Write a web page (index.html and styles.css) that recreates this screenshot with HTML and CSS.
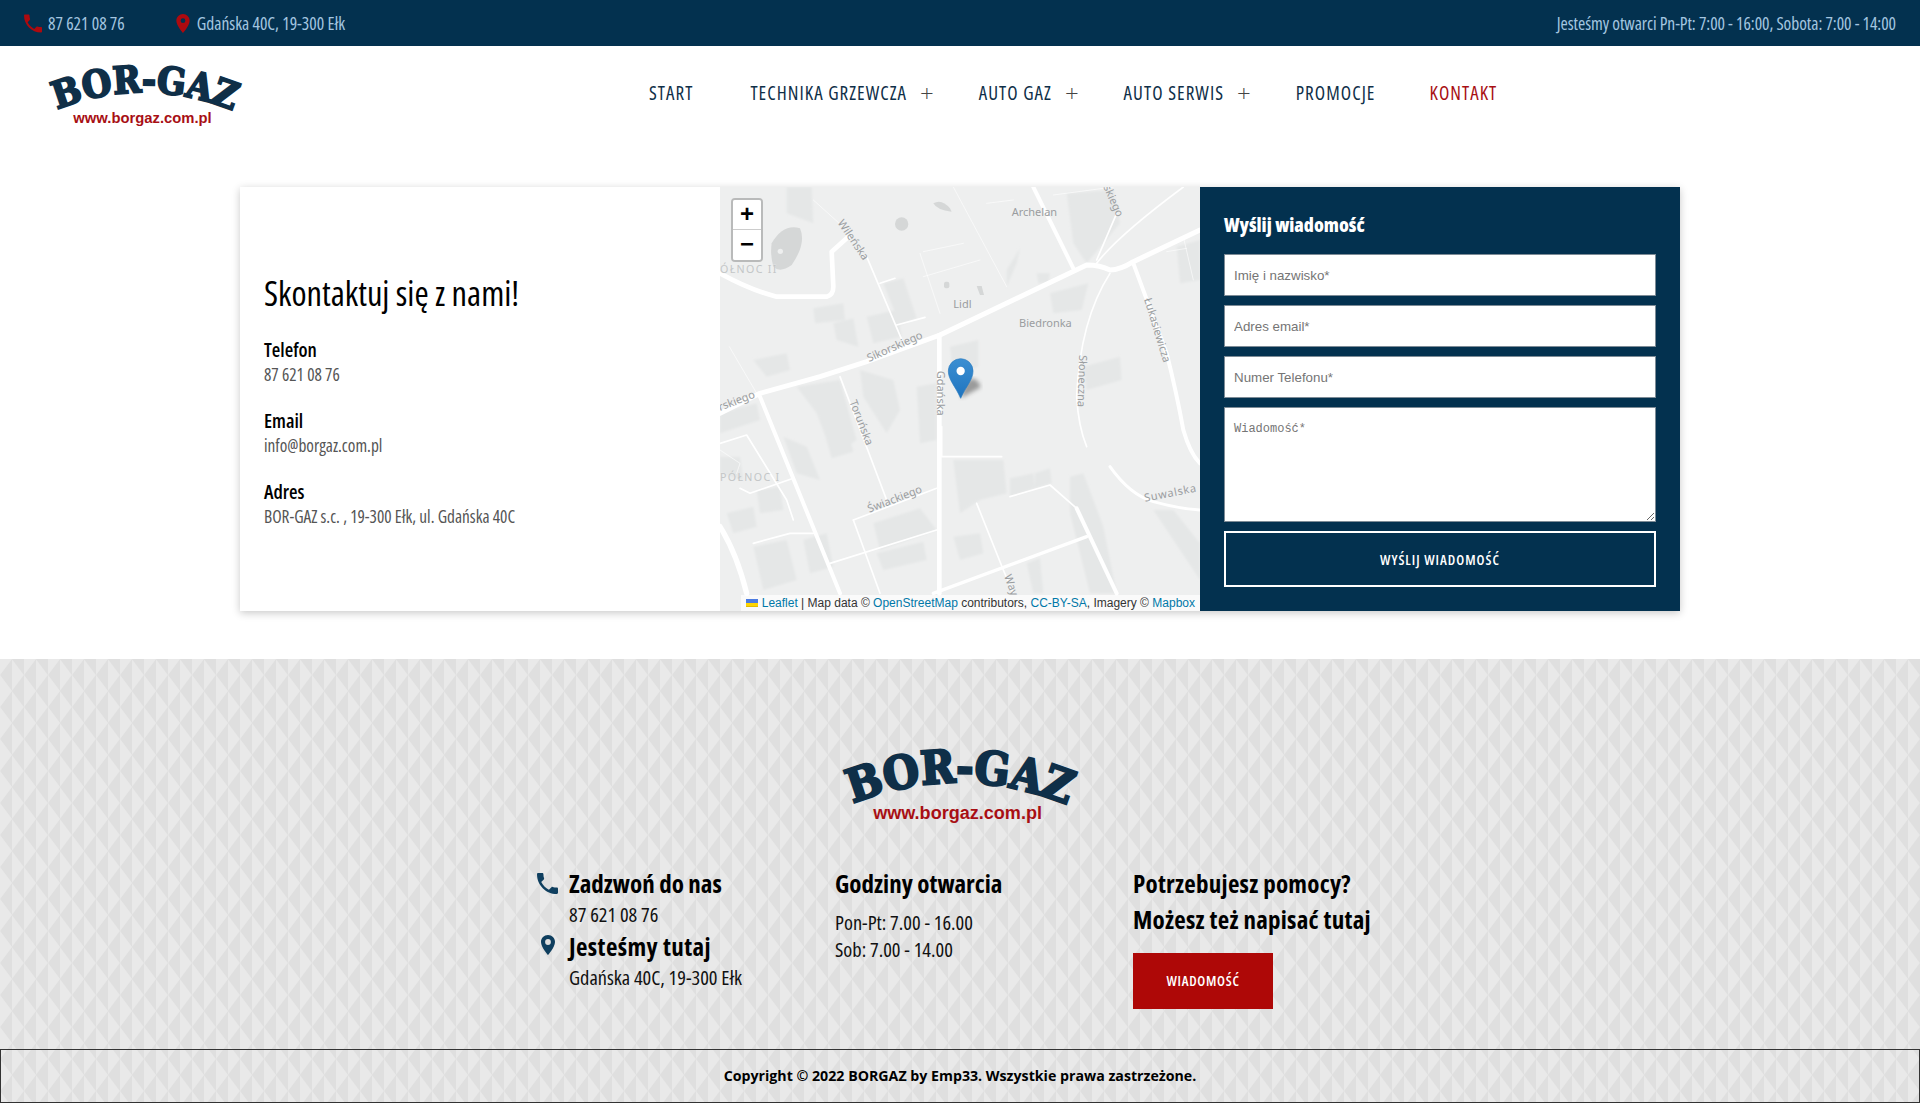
FILE: index.html
```html
<!DOCTYPE html>
<html lang="pl">
<head>
<meta charset="utf-8">
<title>BOR-GAZ Kontakt</title>
<link rel="stylesheet" href="styles.css">
</head>
<body>
<div class="topbar">
  <div class="top-left">
    <span class="top-item"><svg class="top-ico phone" viewBox="3 3 18 18"><path d="M6.62 10.79c1.44 2.83 3.76 5.14 6.59 6.59l2.2-2.2c.27-.27.67-.36 1.02-.24 1.12.37 2.33.57 3.57.57.55 0 1 .45 1 1V20c0 .55-.45 1-1 1-9.39 0-17-7.61-17-17 0-.55.45-1 1-1h3.5c.55 0 1 .45 1 1 0 1.25.2 2.45.57 3.57.11.35.03.74-.25 1.02l-2.2 2.2z"/></svg>87 621 08 76</span>
    <span class="top-item"><svg class="top-ico pin" viewBox="5 2 14 20"><path fill-rule="evenodd" d="M12 2C8.13 2 5 5.13 5 9c0 5.25 7 13 7 13s7-7.75 7-13c0-3.87-3.13-7-7-7zm0 9.5a2.5 2.5 0 1 1 0-5 2.5 2.5 0 0 1 0 5z"/></svg>Gdańska 40C, 19-300 Ełk</span>
  </div>
  <div class="top-right">Jesteśmy otwarci Pn-Pt: 7:00 - 16:00, Sobota: 7:00 - 14:00</div>
</div>

<header class="header">
  <svg class="logo" viewBox="0 0 196 68">
    <defs><path id="arc1" d="M2 53 Q 98 11 196 55"/></defs>
    <text class="logo-main"><textPath href="#arc1" startOffset="49.5%" text-anchor="middle">BOR-GAZ</textPath></text>
    <text class="logo-url" x="95.5" y="63" text-anchor="middle">www.borgaz.com.pl</text>
  </svg>
  <nav class="nav">
    <a class="nav-link nav-start">START</a>
    <a class="nav-link nav-tech">TECHNIKA GRZEWCZA<span class="plus">+</span></a>
    <a class="nav-link nav-gaz">AUTO GAZ<span class="plus">+</span></a>
    <a class="nav-link nav-ser">AUTO SERWIS<span class="plus">+</span></a>
    <a class="nav-link nav-pro">PROMOCJE</a>
    <a class="nav-link active">KONTAKT</a>
  </nav>
</header>

<main class="card">
  <section class="info">
    <h1 class="info-title">Skontaktuj się z nami!</h1>
    <div class="info-block"><h3>Telefon</h3><p>87 621 08 76</p></div>
    <div class="info-block"><h3>Email</h3><p>info@borgaz.com.pl</p></div>
    <div class="info-block"><h3>Adres</h3><p>BOR-GAZ s.c. , 19-300 Ełk, ul. Gdańska 40C</p></div>
  </section>

  <section class="map">
    <svg class="map-svg" viewBox="0 21 1440 1272" preserveAspectRatio="none">
      <defs>
        <linearGradient id="pinfill" x1="0" y1="0" x2="0" y2="1"><stop offset="0" stop-color="#3b8fd2"/><stop offset="1" stop-color="#1f74bf"/></linearGradient>
        <filter id="blur"><feGaussianBlur stdDeviation="6"/></filter>
        <filter id="soft"><feGaussianBlur stdDeviation="2.5"/></filter>
      </defs>
      <rect x="0" y="21" width="1440" height="1272" fill="#eeefef"/>
      <g fill="#e5e7e7" filter="url(#soft)">
        <polygon points="200,21 275,21 280,130 200,100"/>
        <polygon points="490,310 550,295 590,415 540,435"/>
        <polygon points="280,385 370,370 375,420 285,430"/>
        <polygon points="340,430 400,415 415,500 350,480"/>
        <polygon points="440,410 530,390 545,470 460,490"/>
        <polygon points="100,540 200,520 210,570 140,590"/>
        <polygon points="990,340 1105,310 1085,390 1000,400"/>
        <polygon points="1090,560 1200,530 1205,600 1100,630"/>
        <polygon points="690,500 775,480 775,560 700,590"/>
        <polygon points="420,570 520,600 540,690 500,760 430,650"/>
        <polygon points="590,620 650,610 650,780 600,790"/>
        <polygon points="230,620 360,600 410,780 340,830 290,700"/>
        <polygon points="305,730 375,715 400,815 335,835"/>
        <polygon points="190,770 260,800 300,900 230,880"/>
        <polygon points="0,700 110,670 120,720 0,760"/>
        <polygon points="0,830 60,830 70,900 0,880"/>
        <polygon points="700,840 850,840 860,940 780,960 720,1000"/>
        <polygon points="870,895 940,880 945,925 870,950"/>
        <polygon points="945,880 990,865 995,910 945,925"/>
        <polygon points="110,930 180,920 190,990 120,1000"/>
        <polygon points="20,1000 100,980 110,1040 40,1060"/>
        <polygon points="460,1030 600,985 650,1050 480,1110"/>
        <polygon points="470,1120 610,1085 620,1140 490,1170"/>
        <polygon points="250,1080 320,1060 340,1160 270,1180"/>
        <polygon points="100,1100 200,1080 230,1200 130,1230"/>
        <polygon points="700,1070 780,1060 790,1120 720,1140"/>
        <polygon points="1040,40 1180,30 1200,130 1100,250 1060,190"/>
        <polygon points="1370,200 1440,180 1440,300 1380,310"/>
        <polygon points="1050,890 1090,880 1150,1040 1190,1240 1110,1240 1050,1000"/>
        <polygon points="1300,990 1360,990 1440,1090 1440,1200"/>
        <polygon points="860,270 900,205 890,250 860,320"/>
        <polygon points="950,280 990,280 985,310 955,310"/>
        <polygon points="920,1150 960,1135 970,1240 940,1240"/>
        <polygon points="1090,1090 1130,1080 1190,1240 1140,1240"/>
      </g>
      <g fill="#d5d7d7">
        <path d="M155 190 Q190 130 240 145 Q260 190 215 255 Q180 280 160 260 Q150 225 155 190Z"/>
        <circle cx="545" cy="132" r="20"/>
        <path d="M640 70 Q665 55 690 85 L695 95 Q650 90 640 70Z"/>
        <rect x="672" y="305" width="16" height="20" rx="6"/>
        <path d="M770 318 L785 318 L792 345 L780 345Z"/>
      </g>
      <circle cx="181" cy="214" r="8" fill="#eeefef"/>
      <g fill="none" stroke="#fff" stroke-linecap="round" stroke-linejoin="round">
        <g stroke-width="3" stroke-opacity=".6">
          <path d="M280 60 L380 150"/>
          <path d="M600 220 L660 400"/>
          <path d="M700 21 L860 320"/>
          <path d="M800 70 L880 60"/>
          <path d="M610 215 L730 190"/>
          <path d="M610 290 L780 240"/>
          <path d="M28 500 L110 640"/>
          <path d="M0 810 L60 850 L50 880"/>
          <path d="M1390 170 L1420 300"/>
          <path d="M1340 215 L1400 205"/>
          <path d="M1000 45 L1180 21"/>
        </g>
        <g stroke-width="5">
          <path d="M440 230 L550 490"/>
          <path d="M480 310 L525 295"/>
          <path d="M530 435 L615 412"/>
          <path d="M360 590 L500 960"/>
          <path d="M400 1020 L650 925"/>
          <path d="M400 1020 L480 1240"/>
          <path d="M330 1150 L650 1050"/>
          <path d="M100 1090 L210 1060 L280 1060"/>
          <path d="M60 925 L90 940 L220 895"/>
          <path d="M0 790 L80 765 L200 960 L220 1020"/>
          <path d="M665 740 L665 830 L845 830"/>
          <path d="M770 970 L850 1170 L880 1240"/>
          <path d="M870 950 L990 915 L1070 985"/>
          <path d="M1170 280 Q1080 420 1070 650 Q1075 740 1100 800"/>
          <path d="M1190 100 L1130 240"/>
          <path d="M1130 250 Q1190 170 1390 21"/>
        </g>
        <g stroke-width="12">
          <path d="M940 21 L1060 265"/>
          <path d="M120 650 L360 1240"/>
          <path d="M1240 250 L1340 520 Q1370 640 1390 750 Q1410 820 1440 850"/>
          <path d="M1170 860 Q1230 945 1300 965 Q1370 985 1440 990" stroke-width="9"/>
          <path d="M640 1240 L1100 1070" stroke-width="10"/>
          <path d="M1070 985 L1190 1240"/>
          <path d="M0 1040 Q50 1120 80 1240" stroke-width="16"/>
        </g>
        <path stroke-width="15" d="M0 700 L120 640 L300 590 L440 545 L660 465 L1100 255 Q1140 255 1170 270 Q1200 270 1240 245 L1440 150"/>
        <path stroke-width="14" d="M658 465 L658 1240"/>
        <path stroke-width="14" d="M0 280 Q90 330 170 350 L320 350 Q340 345 340 320 L335 215 L385 170"/>
      </g>
      <g class="map-labels">
        <text x="875" y="107">Archelan</text>
        <text x="700" y="384">Lidl</text>
        <text x="897" y="440">Biedronka</text>
        <text x="0" y="278" class="district">ÓŁNOC II</text>
        <text x="0" y="903" class="district">PÓŁNOC I</text>
        <text transform="translate(447 546) rotate(-24)">Sikorskiego</text>
        <text transform="translate(0 693) rotate(-21)">rskiego</text>
        <text transform="translate(448 998) rotate(-21)">Świackiego</text>
        <text transform="translate(352 128) rotate(56)">Wileńska</text>
        <text transform="translate(1150 21) rotate(66)">skiego</text>
        <text transform="translate(1272 358) rotate(73)">Łukasiewicza</text>
        <text transform="translate(1078 525) rotate(92)">Słoneczna</text>
        <text transform="translate(650 572) rotate(90)">Gdańska</text>
        <text transform="translate(388 665) rotate(69)">Toruńska</text>
        <text class="wide-label" transform="translate(1275 965) rotate(-11)">Suwalska</text>
        <text transform="translate(852 1188) rotate(70)">Way</text>
      </g>
      <path d="M722 655 L782 622 Q776 598 755 595 L735 610Z" fill="#555" opacity=".55" filter="url(#blur)"/>
      <path d="M722 655 C706 618 685 600 685 573 A37 37 0 1 1 759 573 C759 600 738 618 722 655Z" fill="url(#pinfill)" stroke="#2a7cc0" stroke-width="2"/>
      <circle cx="722" cy="573" r="12.5" fill="#fff"/>
    </svg>
    <div class="zoom-ctl"><a class="zoom-btn">+</a><a class="zoom-btn">−</a></div>
    <div class="attrib"><svg class="flag" viewBox="0 0 12 8"><rect width="12" height="4" fill="#4C7BE1"/><rect y="4" width="12" height="3" fill="#FFD500"/><rect y="7" width="12" height="1" fill="#E0BC00"/></svg> <a>Leaflet</a> | Map data © <a>OpenStreetMap</a> contributors, <a>CC-BY-SA</a>, Imagery © <a>Mapbox</a></div>
  </section>

  <section class="form">
    <h2 class="form-title">Wyślij wiadomość</h2>
    <input class="field" type="text" placeholder="Imię i nazwisko*">
    <input class="field" type="text" placeholder="Adres email*">
    <input class="field" type="text" placeholder="Numer Telefonu*">
    <textarea class="field area" placeholder="Wiadomość*"></textarea>
    <button class="send" type="button">WYŚLIJ WIADOMOŚĆ</button>
  </section>
</main>

<footer class="footer">
  <svg class="logo foot-logo" viewBox="0 0 196 68">
    <defs><path id="arc2" d="M2 53 Q 98 11 196 55"/></defs>
    <text class="logo-main"><textPath href="#arc2" startOffset="49.5%" text-anchor="middle">BOR-GAZ</textPath></text>
    <text class="logo-url" x="96" y="62.5" text-anchor="middle">www.borgaz.com.pl</text>
  </svg>
  <div class="foot-cols">
    <div class="foot-col">
      <div class="contact-row">
        <svg class="foot-ico" viewBox="3 3 18 18"><path d="M6.62 10.79c1.44 2.83 3.76 5.14 6.59 6.59l2.2-2.2c.27-.27.67-.36 1.02-.24 1.12.37 2.33.57 3.57.57.55 0 1 .45 1 1V20c0 .55-.45 1-1 1-9.39 0-17-7.61-17-17 0-.55.45-1 1-1h3.5c.55 0 1 .45 1 1 0 1.25.2 2.45.57 3.57.11.35.03.74-.25 1.02l-2.2 2.2z"/></svg>
        <h4 class="foot-h">Zadzwoń do nas</h4>
        <p class="foot-p">87 621 08 76</p>
      </div>
      <div class="contact-row">
        <svg class="foot-ico foot-pin" viewBox="5 2 14 20"><path fill-rule="evenodd" d="M12 2C8.13 2 5 5.13 5 9c0 5.25 7 13 7 13s7-7.75 7-13c0-3.87-3.13-7-7-7zm0 9.9a2.9 2.9 0 1 1 0-5.8 2.9 2.9 0 0 1 0 5.8z"/></svg>
        <h4 class="foot-h foot-wide">Jesteśmy tutaj</h4>
        <p class="foot-p">Gdańska 40C, 19-300 Ełk</p>
      </div>
    </div>
    <div class="foot-col">
      <h4 class="foot-h">Godziny otwarcia</h4>
      <p class="foot-p hours">Pon-Pt: 7.00 - 16.00</p>
      <p class="foot-p hours">Sob: 7.00 - 14.00</p>
    </div>
    <div class="foot-col">
      <h4 class="foot-h help">Potrzebujesz pomocy?</h4>
      <h4 class="foot-h help">Możesz też napisać tutaj</h4>
      <a class="msg-btn">WIADOMOŚĆ</a>
    </div>
  </div>
  <div class="copy">Copyright © 2022 BORGAZ by Emp33. Wszystkie prawa zastrzeżone.</div>
</footer>
</body>
</html>
```
FILE: styles.css
```css
* { box-sizing: border-box; }
html, body { margin: 0; padding: 0; }
body {
  width: 1920px;
  height: 1103px;
  overflow: hidden;
  background: #fff;
  color: #000;
  font-family: "Open Sans", "Noto Sans", sans-serif;
  font-stretch: 75%;
}
h1, h2, h3, h4, p { margin: 0; font-weight: inherit; }

/* top bar */
.topbar {
  height: 46px;
  background: #03314f;
  color: #a4c6e0;
  display: flex;
  justify-content: space-between;
  align-items: center;
  padding: 0 24px;
  font-size: 17.5px;
}
.top-left { display: flex; align-items: center; gap: 51px; }
.top-item { display: flex; align-items: center; }
.top-ico { fill: #ad0a0f; margin-right: 6px; height: 19px; }
.top-ico.phone { width: 18px; }
.top-ico.pin { width: 14px; margin-right: 7px; }
.top-right { letter-spacing: -.05px; }

/* header */
.header {
  height: 141px;
  display: flex;
  align-items: flex-start;
  padding: 14px 0 0 47px;
}
.logo { width: 196px; height: 68px; flex: none; overflow: visible; }
.logo-main {
  font-family: "DejaVu Serif Condensed", "DejaVu Serif", serif;
  font-stretch: normal;
  font-weight: 700;
  font-size: 37.5px;
  fill: #0f2f48;
  stroke: #0f2f48;
  stroke-width: 2px;
}
.logo-url {
  font-family: "Liberation Sans", sans-serif;
  font-stretch: normal;
  font-weight: 700;
  font-size: 14.8px;
  fill: #a80f14;
}
.nav {
  display: flex;
  align-items: center;
  margin-left: 406px;
  height: 33px;
  margin-top: 16px;
  font-size: 19px;
  letter-spacing: 1.05px;
  color: #0f2f48;
}
.nav-link { display: flex; align-items: center; margin-right: 45px; white-space: nowrap; }
.nav-start { margin-right: 57px; }
.nav-pro { margin-right: 54px; }
.nav-link.active { color: #a80f14; margin-right: 0; }
.plus { margin-left: 13px; font-size: 24px; font-stretch: normal; line-height: 20px; font-weight: 300; color: #444; letter-spacing: 0; }

/* contact card */
.card {
  width: 1440px;
  height: 424px;
  margin: 0 auto;
  display: grid;
  grid-template-columns: repeat(3, 480px);
  background: #fff;
  box-shadow: 0 2px 8px rgba(0, 0, 0, .22);
}
.info {
  padding: 0 24px;
  display: flex;
  flex-direction: column;
  justify-content: center;
}
.info-title { font-size: 34.3px; line-height: 46px; margin-bottom: 20px; font-weight: 400; }
.info-block { margin-bottom: 21px; }
.info-block:last-child { margin-bottom: 0; }
.info-block h3 { font-size: 19.5px; font-weight: 600; line-height: 27px; }
.info-block p { font-size: 17.3px; color: #555; line-height: 23px; font-weight: 400; }

.map { position: relative; overflow: hidden; background: #eeefef; }
.map-svg { display: block; width: 480px; height: 424px; }
.map-labels text {
  font-family: "Noto Sans", "Open Sans", sans-serif;
  font-stretch: normal;
  font-size: 33px;
  fill: #9a9d9f;
  stroke: #eeefef;
  stroke-width: 1px;
  paint-order: stroke;
}
.map-labels .district { font-size: 32px; letter-spacing: 4px; fill: #c3c6c7; }
.map-labels .wide-label { letter-spacing: 2px; }
.zoom-ctl {
  position: absolute;
  top: 11px;
  left: 11px;
  width: 32px;
  border: 2px solid rgba(0, 0, 0, .22);
  border-radius: 4px;
  background-clip: padding-box;
  display: flex;
  flex-direction: column;
}
.zoom-btn {
  height: 30px;
  background: #fff;
  color: #000;
  font-family: "Liberation Sans", sans-serif;
  font-stretch: normal;
  font-weight: 700;
  font-size: 24px;
  line-height: 28px;
  text-align: center;
}
.zoom-btn:first-child { border-bottom: 1px solid #ccc; border-radius: 2px 2px 0 0; }
.zoom-btn:last-child { border-radius: 0 0 2px 2px; }
.attrib {
  position: absolute;
  right: 0;
  bottom: 0;
  height: 16px;
  padding: 0 5px;
  background: rgba(255, 255, 255, .7);
  font-family: "Liberation Sans", sans-serif;
  font-stretch: normal;
  font-size: 12px;
  line-height: 16px;
  color: #333;
  white-space: nowrap;
}
.attrib a { color: #0078a8; }
.flag { width: 12px; height: 8px; }

.form {
  background: #03314f;
  padding: 24px;
  display: flex;
  flex-direction: column;
}
.form-title { color: #fff; font-size: 19.2px; font-weight: 800; line-height: 28px; margin: 0 0 15px; }
.field {
  display: block;
  width: 100%;
  height: 42px;
  margin: 0 0 9px;
  padding: 0 9px;
  background: #fff;
  border: 1px solid #7d8b96;
  font-family: "Liberation Sans", sans-serif;
  font-stretch: normal;
  font-size: 13.33px;
  border-radius: 0;
}
.field::placeholder { color: #757575; opacity: 1; }
.area {
  height: 115px;
  padding: 14px 9px;
  font-family: "Liberation Mono", monospace;
  font-size: 12px;
}
.send {
  height: 56px;
  background: #03314f;
  border: 2px solid #fff;
  color: #fff;
  font-family: inherit;
  font-stretch: 75%;
  font-size: 14px;
  font-weight: 600;
  letter-spacing: 1px;
  padding: 0;
}

/* footer */
.footer {
  position: relative;
  margin-top: 48px;
  height: 444px;
  background-color: #e5e5e5;
  background-image: url("data:image/svg+xml,%3Csvg xmlns='http://www.w3.org/2000/svg' width='24' height='32'%3E%3Crect width='24' height='32' fill='%23e5e5e5'/%3E%3Cpolygon points='0,16 12,0 12,32' fill='%23dfdfdf'/%3E%3Cpolygon points='24,16 12,0 12,32' fill='%23e9e9e9'/%3E%3Cpolygon points='0,0 12,0 0,16' fill='%23e9e9e9'/%3E%3Cpolygon points='0,32 12,32 0,16' fill='%23e9e9e9'/%3E%3Cpolygon points='24,0 12,0 24,16' fill='%23dfdfdf'/%3E%3Cpolygon points='24,32 12,32 24,16' fill='%23dfdfdf'/%3E%3C/svg%3E");
  display: flex;
  flex-direction: column;
  align-items: center;
}
.foot-logo { width: 240px; height: 83px; margin-top: 84px; }
.foot-cols {
  display: grid;
  grid-template-columns: repeat(3, 298px);
  margin-top: 41px;
  width: 894px;
}
.foot-col { padding-left: 24px; }
.contact-row { position: relative; padding-left: 32px; min-height: 63px; }
.foot-ico { position: absolute; left: 0; top: 6px; width: 21px; height: 21px; fill: #0f3f5f; }
.foot-pin { left: 4px; top: 5px; width: 14px; height: 20px; }
.foot-h { font-size: 25px; font-weight: 700; line-height: 33px; color: #000; white-space: nowrap; }
.foot-wide { letter-spacing: .4px; }
.foot-p { font-size: 20.4px; line-height: 29px; color: #111; white-space: nowrap; }
.hours { line-height: 27px; }
.foot-col > .hours:nth-of-type(1) { margin-top: 9px; }
.help { line-height: 36px; letter-spacing: .25px; }
.help:first-child { margin-top: -2.5px; }
.msg-btn {
  display: block;
  width: 140px;
  height: 56px;
  margin-top: 16px;
  background: #ae0807;
  color: #fff;
  font-size: 14px;
  font-weight: 600;
  letter-spacing: .7px;
  line-height: 56px;
  text-align: center;
}
.copy {
  margin-top: auto;
  width: 100%;
  height: 54px;
  border: 1px solid #333;
  font-size: 14.2px;
  font-stretch: normal;
  font-weight: 700;
  line-height: 52px;
  text-align: center;
  color: #000;
}
```
